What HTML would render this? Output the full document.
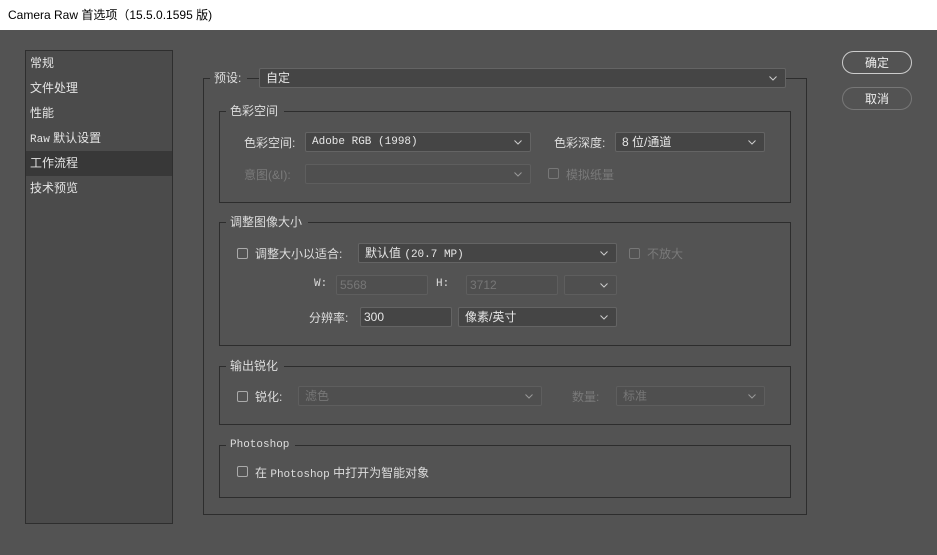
<html><head><style>
body{margin:0;width:937px;height:555px;background:#535353;font-family:"Liberation Sans","Noto Sans CJK SC",sans-serif;font-size:12px;color:#ddd;position:relative;overflow:hidden}
.a{position:absolute}
.t{background:#fff;color:#000;height:30px;left:0;top:0;width:937px;font-size:12px;line-height:30px}
.side{left:25px;top:50px;width:146px;height:472px;border:1px solid #2e2e2e;background:#4b4b4b}
.side div{height:25px;line-height:25px;padding-left:4px;color:#e4e4e4}
.sel{background:#383838}
.g{border:1px solid #2d2d2d}
.lg{background:#535353;padding:0 6px 0 4px;line-height:14px}
.f{background:#454545;border:1px solid #646464;border-radius:2px;height:20px;line-height:18px;padding-left:6px;box-sizing:border-box;color:#e6e6e6}
.f.d{background:#4f4f4f;border-color:#5e5e5e;color:#777}
.f svg{position:absolute;right:8px;top:7px}
.cb{width:11px;height:11px;border:1px solid #aaa;border-radius:2px;box-sizing:border-box}
.cb.d{border-color:#777}
.dim{color:#7a7a7a}
.btn{border:1px solid #ccc;border-radius:12px;width:70px;height:23px;text-align:center;line-height:22px;color:#eee;box-sizing:border-box}
.mono{font-family:"Liberation Mono","Noto Sans CJK SC",monospace;font-size:11px}
</style></head><body>
<div class="a t"><span style="padding-left:8px">Camera Raw 首选项（15.5.0.1595 版)</span></div>
<div class="a side"><div>常规</div><div>文件处理</div><div>性能</div><div><span class="mono">Raw</span> 默认设置</div><div class="sel">工作流程</div><div>技术预览</div></div>
<div class="a btn" style="left:842px;top:51px">确定</div>
<div class="a btn" style="left:842px;top:87px;border-color:#777">取消</div>

<div class="a g" style="left:203px;top:78px;width:602px;height:435px"></div>
<div class="a lg" style="left:210px;top:71px">预设:</div>
<div class="a f" style="left:259px;top:68px;width:527px">自定<svg width="8" height="5"><path d="M0.5 0.5L4 4L7.5 0.5" stroke="#ccc" fill="none"/></svg></div>

<div class="a g" style="left:219px;top:111px;width:570px;height:90px"></div>
<div class="a lg" style="left:226px;top:104px">色彩空间</div>
<div class="a" style="left:244px;top:134px">色彩空间:</div>
<div class="a f mono" style="left:305px;top:132px;width:226px">Adobe RGB (1998)<svg width="8" height="5"><path d="M0.5 0.5L4 4L7.5 0.5" stroke="#ccc" fill="none"/></svg></div>
<div class="a" style="left:554px;top:134px">色彩深度:</div>
<div class="a f" style="left:615px;top:132px;width:150px">8 位/通道<svg width="8" height="5"><path d="M0.5 0.5L4 4L7.5 0.5" stroke="#ccc" fill="none"/></svg></div>
<div class="a dim" style="left:244px;top:166px">意图(&amp;I):</div>
<div class="a f d" style="left:305px;top:164px;width:226px"><svg width="8" height="5"><path d="M0.5 0.5L4 4L7.5 0.5" stroke="#999" fill="none"/></svg></div>
<div class="a cb d" style="left:548px;top:168px"></div>
<div class="a dim" style="left:566px;top:166px">模拟纸量</div>

<div class="a g" style="left:219px;top:222px;width:570px;height:122px"></div>
<div class="a lg" style="left:226px;top:215px">调整图像大小</div>
<div class="a cb" style="left:237px;top:248px"></div>
<div class="a" style="left:255px;top:245px">调整大小以适合:</div>
<div class="a f" style="left:358px;top:243px;width:259px">默认值 <span class="mono">(20.7 MP)</span><svg width="8" height="5"><path d="M0.5 0.5L4 4L7.5 0.5" stroke="#ccc" fill="none"/></svg></div>
<div class="a cb d" style="left:629px;top:248px"></div>
<div class="a dim" style="left:647px;top:245px">不放大</div>
<div class="a mono" style="left:314px;top:278px">W:</div>
<div class="a f d" style="left:336px;top:275px;width:92px;padding-left:3px">5568</div>
<div class="a mono" style="left:436px;top:278px">H:</div>
<div class="a f d" style="left:466px;top:275px;width:92px;padding-left:3px">3712</div>
<div class="a f d" style="left:564px;top:275px;width:53px"><svg width="8" height="5"><path d="M0.5 0.5L4 4L7.5 0.5" stroke="#ccc" fill="none"/></svg></div>
<div class="a" style="left:309px;top:309px">分辨率:</div>
<div class="a f" style="left:360px;top:307px;width:92px;padding-left:3px">300</div>
<div class="a f" style="left:458px;top:307px;width:159px">像素/英寸<svg width="8" height="5"><path d="M0.5 0.5L4 4L7.5 0.5" stroke="#ccc" fill="none"/></svg></div>

<div class="a g" style="left:219px;top:366px;width:570px;height:57px"></div>
<div class="a lg" style="left:226px;top:359px">输出锐化</div>
<div class="a cb" style="left:237px;top:391px"></div>
<div class="a" style="left:255px;top:388px">锐化:</div>
<div class="a f d" style="left:298px;top:386px;width:244px">滤色<svg width="8" height="5"><path d="M0.5 0.5L4 4L7.5 0.5" stroke="#999" fill="none"/></svg></div>
<div class="a dim" style="left:572px;top:388px">数量:</div>
<div class="a f d" style="left:616px;top:386px;width:149px">标准<svg width="8" height="5"><path d="M0.5 0.5L4 4L7.5 0.5" stroke="#999" fill="none"/></svg></div>

<div class="a g" style="left:219px;top:445px;width:570px;height:51px"></div>
<div class="a lg mono" style="left:226px;top:438px">Photoshop</div>
<div class="a cb" style="left:237px;top:466px"></div>
<div class="a" style="left:255px;top:464px">在 <span class="mono">Photoshop</span> 中打开为智能对象</div>
</body></html>
